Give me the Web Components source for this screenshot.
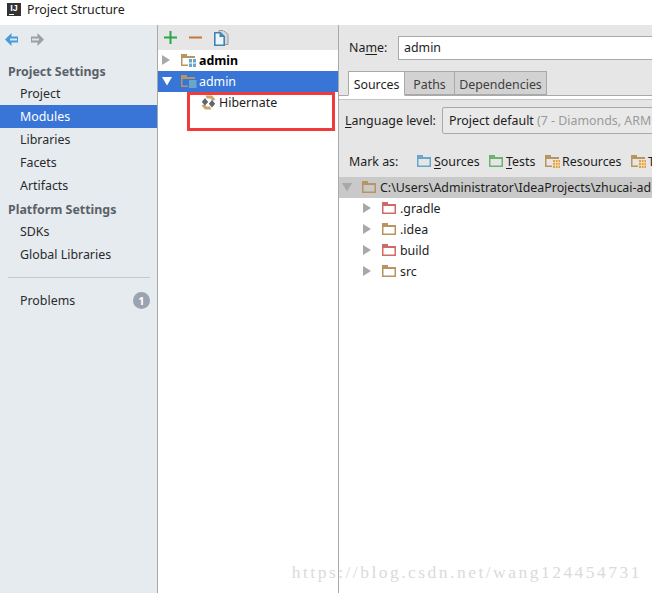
<!DOCTYPE html>
<html>
<head>
<meta charset="utf-8">
<title>Project Structure</title>
<style>
  html, body { margin: 0; height: 100%; overflow: hidden; background: #fff; }
  body { font: 12.400px "Noto Sans", sans-serif; color: #1d1d1d; }
  project-structure { height: 593px; }
</style>
</head>
<body>
<project-structure></project-structure>

<script>
// folder outline shared by the tree icons, extra draws past the corner on purpose
function folder(color, extra) {
  return `<svg width="14" height="12" viewBox="0 0 14 12" style="overflow:visible;display:block">
    <path d="M.75 2.750h12.500v8.500H.75z" fill="none" stroke="${color}" stroke-width="1.500"/>
    <path d="M0 0h6v2h8v2H0z" fill="${color}"/>${extra || ''}</svg>`;
}

class TitleBar extends HTMLElement {
  constructor() {
    super();
    this.attachShadow({mode: 'open'}).innerHTML = `
    <style>
      :host { display: flex; align-items: flex-start; height: 25px; background: #fff; padding: 3px 0 0 7px; gap: 6px; box-sizing: border-box; }
      .logo { position: relative; width: 14px; height: 13px; background: #333; color: #fff; font: bold 9px/10px "Liberation Sans", sans-serif; text-align: center; }
      .logo i { position: absolute; left: 2px; bottom: 1px; width: 5px; height: 1px; background: #fff; }
      span { line-height: 13px; }
    </style>
    <div class="logo">IJ<i></i></div><span><slot></slot></span>`;
  }
}

class NavItem extends HTMLElement {
  constructor() {
    super();
    this.attachShadow({mode: 'open'}).innerHTML = `
    <style>
      :host { display: flex; align-items: center; height: 23px; padding-left: 20px; color: #2a2a2a; padding-bottom: 1px; box-sizing: border-box; }
      :host([selected]) { background: #3875d7; color: #fff; }
      :host([heading]) { height: 22px; padding-left: 8px; padding-bottom: 0; font-weight: 700; color: #5b6168; }
    </style>
    <slot></slot>`;
  }
}

class SideBar extends HTMLElement {
  constructor() {
    super();
    this.attachShadow({mode: 'open'}).innerHTML = `
    <style>
      :host { display: block; background: #e6ebf0; border-right: 1px solid #a9a9a9; box-sizing: border-box; }
      .arrows { display: flex; gap: 13px; height: 35px; padding: 8px 0 0 5px; box-sizing: border-box; }
      svg { display: block; }
      hr { border: 0; border-top: 1px solid #c6c8ca; margin: 11px 7px 11px 8px; }
      .problems { display: flex; justify-content: space-between; align-items: center; padding-right: 7px; }
      .badge { width: 17px; height: 17px; border-radius: 50%; background: #9aa3b0; color: #fff; font: bold 11px/17px "Noto Sans", sans-serif; text-align: center; }
    </style>
    <div class="arrows">
      <svg width="13" height="13" viewBox="0 0 13 13"><path d="M6.500 0 0 6.500 6.500 13V9.500H13v-6H6.500z" fill="#4a9ad8"/><path d="M5 5.500h7v2H5z" fill="#d5e8f6"/></svg>
      <svg width="13" height="13" viewBox="0 0 13 13"><path d="M6.500 0 13 6.500 6.500 13V9.500H0v-6h6.500z" fill="#9c9fa3"/><path d="M1 5.500h7v2H1z" fill="#dfe3e7"/></svg>
    </div>
    <nav-item heading>Project Settings</nav-item>
    <nav-item>Project</nav-item>
    <nav-item selected>Modules</nav-item>
    <nav-item>Libraries</nav-item>
    <nav-item>Facets</nav-item>
    <nav-item>Artifacts</nav-item>
    <nav-item heading style="margin-top:1px">Platform Settings</nav-item>
    <nav-item>SDKs</nav-item>
    <nav-item>Global Libraries</nav-item>
    <hr>
    <div class="problems"><nav-item>Problems</nav-item><div class="badge">1</div></div>`;
  }
}

class TreeRow extends HTMLElement {
  constructor() {
    super();
    const open = this.hasAttribute('open');
    const arrow = this.hasAttribute('leaf') ? '' : open
      ? '<path d="M0 1h10L5 9.500z"/>'
      : '<path d="M0 0l8 5-8 5z"/>';
    this.attachShadow({mode: 'open'}).innerHTML = `
    <style>
      :host { display: flex; align-items: center; height: 21px; color: #1d1d1d; white-space: nowrap; padding-bottom: 1px; box-sizing: border-box; }
      :host([selected]) { background: #3875d7; color: #fff; }
      :host([selected]) svg.arrow { fill: #fff; }
      :host([header]) { background: #c9c9c9; }
      svg.arrow { fill: #a8a8a8; width: 10px; height: 10px; flex: none; }
      .icon { display: flex; flex: none; margin-right: 4px; }
    </style>
    <svg class="arrow" viewBox="0 0 10 10">${arrow}</svg>
    <span class="icon"><slot name="icon"></slot></span>
    <slot></slot>`;
  }
}

class ModuleTree extends HTMLElement {
  constructor() {
    super();
    const grid = '<path d="M7 4h8.500v9H7z" fill="#fff"/><path d="M8 5h3v3.500H8zM12 5h3v3.500h-3zM8 9.500h3V13H8zM12 9.500h3V13h-3z" fill="#6aa5cc"/>';
    const block = '<path d="M7 4h8.500v9H7z" fill="#3875d7"/><path d="M8 5h7.500v8H8z" fill="#6aa5cc"/>';
    this.attachShadow({mode: 'open'}).innerHTML = `
    <style>
      :host { display: block; position: relative; background: #fff; border-right: 1px solid #a9a9a9; box-sizing: border-box; }
      .toolbar { display: flex; align-items: center; gap: 12px; height: 25px; padding-left: 6px; background: #e6e6e6; }
      tree-row { padding-left: 4px; }
      .bold { font-weight: 700; color: #000; }
      .hib { padding-left: 33px; }
      .frame { position: absolute; left: 29px; top: 67px; width: 142px; height: 33px; border: 3px solid #f23a3a; }
      svg { display: block; }
      .mod { margin-left: 9px; }
    </style>
    <div class="toolbar">
      <svg width="13" height="13" viewBox="0 0 13 13"><path d="M5.500 0h2v5.500H13v2H7.500V13h-2V7.500H0v-2h5.500z" fill="#2da64a"/></svg>
      <svg width="13" height="13" viewBox="0 0 13 13"><path d="M0 5.500h13v2H0z" fill="#c8743c"/></svg>
      <svg width="15" height="16" viewBox="0 0 15 16"><path d="M5 2.500V.5h4l1 1h1l3 3v10h-3" fill="#d8d8d8" stroke="#9a9a9a"/><path d="M.8 2.800h5.500l3.900 3.900v8.500H.8z" fill="#eef5fa" stroke="#3f84b5" stroke-width="1.600"/><path d="M5.500 3v4h4.500z" fill="#3f84b5"/></svg>
    </div>
    <tree-row><span slot="icon" class="mod">${folder('#b8945f', grid)}</span><span class="bold">admin</span></tree-row>
    <tree-row open selected><span slot="icon" class="mod">${folder('#b8945f', block)}</span>admin</tree-row>
    <tree-row class="hib" leaf><svg slot="icon" width="15" height="15" viewBox="0 0 15 15" style="margin-right:-1px"><path d="M4.500 .5h6.500l3.500 4-3 1.500L9.500 3.500H6zM10.500 14.500H4L.5 10.500l3-1.500 2 2.500H9z" fill="#c9a56d"/><path d="M4 3 7.200 7 4 10.500.8 7zM11 5l3.200 3.800L11 12.500 7.800 8.800z" fill="#5c6672"/></svg>Hibernate</tree-row>
    <div class="frame"></div>`;
  }
}

class SourcesPane extends HTMLElement {
  constructor() {
    super();
    const tag = '<path d="M7 4h8.500v9H7z" fill="#e6e6e6"/><path d="M8 5h7v8H8z" fill="#e0a244"/><path d="M8 7.500h7M8 10.300h7M10.500 5v8M13 5v8" stroke="#f5e3c4" stroke-width=".8"/>';
    const tree = (name, color) => `<tree-row style="padding-left:24px"><span slot="icon" style="margin-left:9px">${folder(color)}</span>${name}</tree-row>`;
    this.attachShadow({mode: 'open'}).innerHTML = `
    <style>
      :host { display: block; min-width: 0; overflow: hidden; background: #e6e6e6; }
      .top { display: flex; align-items: center; height: 24px; padding: 11px 0 0 10px; }
      .top span { width: 49px; flex: none; padding-bottom: 1px; }
      .name { width: 300px; height: 24px; box-sizing: border-box; border: 1px solid #a9a9a9; background: #fff; padding-left: 5px; line-height: 21px; flex: none; }
      .tabs { display: flex; height: 24px; margin-top: 11px; padding-left: 9px; border-bottom: 1px solid #a9a9a9; }
      .tab { box-sizing: border-box; border: 1px solid #a9a9a9; border-left: 0; background: #d2d2d2; text-align: center; line-height: 25px; color: #3e3e3e; height: 24px; }
      .tab.on { background: #fff; border-left: 1px solid #a9a9a9; border-bottom: 1px solid #fff; color: #1d1d1d; height: 25px; }
      .rule { height: 4px; background: #fff; border-bottom: 1px solid #c4c4c4; box-sizing: border-box; }
      .lang { display: flex; align-items: center; height: 27px; margin-top: 7px; padding-left: 6px; white-space: nowrap; }
      .lang span { width: 97px; flex: none; }
      .select { flex: none; width: 300px; height: 27px; box-sizing: border-box; border: 1px solid #a9a9a9; border-radius: 2px; background: #e9e9e9; padding-left: 6px; line-height: 25px; overflow: hidden; }
      .select i { font-style: normal; color: #9a9a9a; }
      u { text-underline-offset: 2px; }
      .mark { display: flex; align-items: center; height: 24px; margin-top: 15px; padding-left: 10px; white-space: nowrap; overflow: hidden; }
      .mark span { display: flex; align-items: center; gap: 3px; flex: none; }
      .files { background: #fff; margin-top: 4px; height: 416px; }
    </style>
    <div class="top"><span>Na<u>m</u>e:</span><div class="name">admin</div></div>
    <div class="tabs"><div class="tab on" style="width:57px">Sources</div><div class="tab" style="width:50px">Paths</div><div class="tab" style="width:92px">Dependencies</div></div>
    <div class="rule"></div>
    <div class="lang"><span><u>L</u>anguage level:</span><div class="select">Project default <i>(7 - Diamonds, ARM</i></div></div>
    <div class="mark">
      <span style="width:68px">Mark as:</span>
      <span style="width:72px">${folder('#6aa5cc')}<div><u>S</u>ources</div></span>
      <span style="width:56px">${folder('#6db36d')}<div><u>T</u>ests</div></span>
      <span style="width:86px">${folder('#b8945f', tag)}<div>Resources</div></span>
      <span>${folder('#b8945f', tag)}<div>T</div></span>
    </div>
    <div class="files">
      <tree-row header open style="padding-left:3px"><span slot="icon" style="margin-left:10px">${folder('#b8945f')}</span>C:\\Users\\Administrator\\IdeaProjects\\zhucai-ad</tree-row>
      ${tree('.gradle', '#cf6a64')}
      ${tree('.idea', '#b8945f')}
      ${tree('build', '#cf6a64')}
      ${tree('src', '#b8945f')}
    </div>`;
  }
}

class ProjectStructure extends HTMLElement {
  constructor() {
    super();
    this.attachShadow({mode: 'open'}).innerHTML = `
    <style>
      :host { display: flex; flex-direction: column; position: relative; overflow: hidden; }
      .main { flex: 1; display: grid; grid-template-columns: 158px 181px 1fr; min-height: 0; }
      .mark { position: absolute; right: 10px; bottom: 10px; font: 17.500px "Liberation Serif", serif; letter-spacing: 2.480px; color: #d8dcd8; white-space: nowrap; }
    </style>
    <title-bar>Project Structure</title-bar>
    <div class="main"><side-bar></side-bar><module-tree></module-tree><sources-pane></sources-pane></div>
    <div class="mark">https://blog.csdn.net/wang124454731</div>`;
  }
}

customElements.define('title-bar', TitleBar);
customElements.define('nav-item', NavItem);
customElements.define('side-bar', SideBar);
customElements.define('tree-row', TreeRow);
customElements.define('module-tree', ModuleTree);
customElements.define('sources-pane', SourcesPane);
customElements.define('project-structure', ProjectStructure);
</script>
</body>
</html>
